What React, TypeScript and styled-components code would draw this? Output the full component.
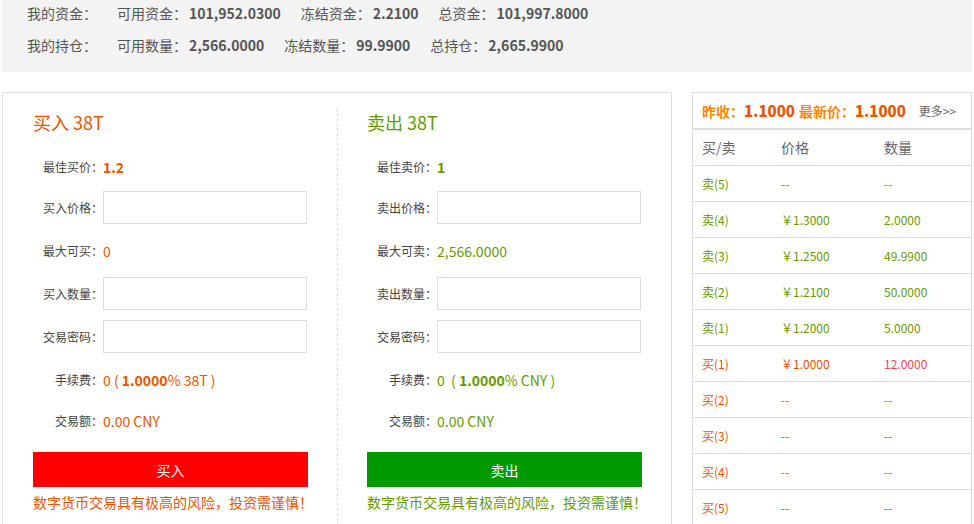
import React from 'react';
import styled, { createGlobalStyle, css } from 'styled-components';

const GlobalStyle = createGlobalStyle`
  body {
    margin: 0;
    font-family: "Microsoft YaHei", "Noto Sans CJK SC", "Noto Sans", sans-serif;
    color: #555;
    background: #fff;
  }
  * { box-sizing: border-box; }
`;

const BUY = '#e55600';
const SELL = '#669900';

const Page = styled.div`
  width: 970px;
  margin-left: 2px;
`;

const TopBar = styled.div`
  background-color: #f3f3f3;
  height: 72px;
  padding: 0 25px;
`;

const TopRow = styled.div<{ first?: boolean }>`
  display: flex;
  align-items: center;
  height: 26px;
  font-size: 14px;
  margin-top: ${p => (p.first ? '0' : '6px')};
`;

const TopLabel = styled.span`
  width: 90px;
`;

const TopItem = styled.span`
  margin-right: 20px;
  b {
    margin-left: 2px;
    color: #555;
    font-weight: bold;
  }
`;

const Main = styled.div`
  display: flex;
  align-items: flex-start;
  gap: 20px;
  margin-top: 20px;
`;

const TradeBox = styled.div`
  width: 670px;
  height: 460px;
  border: 1px solid #ddd;
  display: flex;
`;

const Column = styled.div<{ side: 'buy' | 'sell' }>`
  margin-top: 15px;
  ${p =>
    p.side === 'buy'
      ? css`
          padding: 0 29px 0 30px;
          width: 334px;
        `
      : css`
          padding: 0 28px 0 29px;
          border-left: 1px dashed #ddd;
          flex: 1;
        `}
`;

const Title = styled.h2<{ color: string }>`
  margin: 0 0 14px;
  height: 28px;
  line-height: 28px;
  font-size: 18px;
  font-weight: normal;
  color: ${p => p.color};
`;

const FormRow = styled.div<{ tight?: boolean }>`
  display: flex;
  align-items: center;
  height: 33px;
  margin-bottom: ${p => (p.tight ? '8px' : '10px')};
`;

const Label = styled.label`
  width: 70px;
  text-align: right;
  font-size: 12px;
  color: #444;
  white-space: nowrap;
`;

const Value = styled.span<{ color: string; bold?: boolean }>`
  font-size: 14px;
  color: ${p => p.color};
  font-weight: ${p => (p.bold ? 'bold' : 'normal')};
  b {
    font-weight: bold;
  }
`;

const Input = styled.input`
  width: 204px;
  height: 33px;
  border: 1px solid #ddd;
  outline: none;
  padding: 0 8px;
  font-size: 13px;
`;

const SubmitButton = styled.button<{ color: string }>`
  display: block;
  width: 275px;
  height: 35px;
  margin-top: 15px;
  border: none;
  background-color: ${p => p.color};
  color: #fff;
  font-family: inherit;
  font-size: 14px;
  cursor: pointer;
`;

const Warning = styled.p<{ color: string }>`
  margin: 5px 0 0;
  line-height: 20px;
  font-size: 14px;
  white-space: nowrap;
  color: ${p => p.color};
`;

const BookBox = styled.div`
  width: 281px;
  height: 460px;
  border: 1px solid #ddd;
  overflow: hidden;
`;

const BookHeader = styled.div`
  display: flex;
  align-items: center;
  height: 37px;
  padding: 0 15px 0 9px;
  border-bottom: 2px solid #ddd;
  font-size: 14px;
  white-space: nowrap;
`;

const Stat = styled.span`
  color: #ff8800;
  font-weight: bold;
  margin-right: 4px;
  b {
    color: ${BUY};
    font-size: 15px;
  }
`;

const MoreLink = styled.a`
  margin-left: auto;
  font-size: 12px;
  color: #666;
  text-decoration: none;
`;

const Table = styled.table`
  width: 100%;
  border-collapse: collapse;
`;

const Th = styled.th`
  height: 35px;
  padding: 0 0 0 9px;
  text-align: left;
  font-size: 14px;
  font-weight: normal;
  color: #666;
  border-bottom: 1px solid #ddd;
`;

const Td = styled.td<{ color: string }>`
  height: 36px;
  padding: 0 0 0 9px;
  font-size: 12px;
  color: ${p => p.color};
  border-bottom: 1px solid #ddd;
`;

type Side = 'buy' | 'sell';

interface TradeFormProps {
  side: Side;
}

const TradeForm: React.FC<TradeFormProps> = ({ side }) => {
  const isBuy = side === 'buy';
  const color = isBuy ? BUY : SELL;
  const act = isBuy ? '买入' : '卖出';
  return (
    <Column side={side}>
      <Title color={color}>{act} 38T</Title>
      <FormRow tight>
        <Label>{isBuy ? '最佳买价' : '最佳卖价'}：</Label>
        <Value color={color} bold>{isBuy ? '1.2' : '1'}</Value>
      </FormRow>
      <FormRow>
        <Label>{act}价格：</Label>
        <Input type="text" />
      </FormRow>
      <FormRow>
        <Label>{isBuy ? '最大可买' : '最大可卖'}：</Label>
        <Value color={color}>{isBuy ? '0' : '2,566.0000'}</Value>
      </FormRow>
      <FormRow>
        <Label>{act}数量：</Label>
        <Input type="text" />
      </FormRow>
      <FormRow>
        <Label>交易密码：</Label>
        <Input type="password" />
      </FormRow>
      <FormRow tight>
        <Label>手续费：</Label>
        {isBuy ? (
          <Value color={color}>0 ( <b>1.0000</b>% 38T )</Value>
        ) : (
          <Value color={color}>0 &nbsp;( <b>1.0000</b>% CNY )</Value>
        )}
      </FormRow>
      <FormRow>
        <Label>交易额：</Label>
        <Value color={color}>0.00 CNY</Value>
      </FormRow>
      <SubmitButton color={isBuy ? '#ff0000' : '#009900'}>{act}</SubmitButton>
      <Warning color={color}>数字货币交易具有极高的风险，投资需谨慎！</Warning>
    </Column>
  );
};

const book = [
  { side: 'sell', n: 5, price: '--', qty: '--' },
  { side: 'sell', n: 4, price: '￥1.3000', qty: '2.0000' },
  { side: 'sell', n: 3, price: '￥1.2500', qty: '49.9900' },
  { side: 'sell', n: 2, price: '￥1.2100', qty: '50.0000' },
  { side: 'sell', n: 1, price: '￥1.2000', qty: '5.0000' },
  { side: 'buy', n: 1, price: '￥1.0000', qty: '12.0000' },
  { side: 'buy', n: 2, price: '--', qty: '--' },
  { side: 'buy', n: 3, price: '--', qty: '--' },
  { side: 'buy', n: 4, price: '--', qty: '--' },
  { side: 'buy', n: 5, price: '--', qty: '--' },
];

const OrderBook: React.FC = () => (
  <BookBox>
    <BookHeader>
      <Stat>昨收：<b>1.1000</b></Stat>
      <Stat>最新价：<b>1.1000</b></Stat>
      <MoreLink href="#">更多&gt;&gt;</MoreLink>
    </BookHeader>
    <Table>
      <colgroup>
        <col style={{ width: 79 }} />
        <col style={{ width: 103 }} />
        <col />
      </colgroup>
      <thead>
        <tr>
          <Th>买/卖</Th>
          <Th>价格</Th>
          <Th>数量</Th>
        </tr>
      </thead>
      <tbody>
        {book.map(row => {
          const c = row.side === 'buy' ? BUY : SELL;
          const qtyColor = row.side === 'buy' && row.qty !== '--' ? '#e8474f' : c;
          return (
            <tr key={row.side + row.n}>
              <Td color={c}>{row.side === 'buy' ? '买' : '卖'}({row.n})</Td>
              <Td color={c}>{row.price}</Td>
              <Td color={qtyColor}>{row.qty}</Td>
            </tr>
          );
        })}
      </tbody>
    </Table>
  </BookBox>
);

const App: React.FC = () => (
  <Page>
    <GlobalStyle />
    <TopBar>
      <TopRow first>
        <TopLabel>我的资金：</TopLabel>
        <TopItem>可用资金：<b>101,952.0300</b></TopItem>
        <TopItem>冻结资金：<b>2.2100</b></TopItem>
        <TopItem>总资金：<b>101,997.8000</b></TopItem>
      </TopRow>
      <TopRow>
        <TopLabel>我的持仓：</TopLabel>
        <TopItem>可用数量：<b>2,566.0000</b></TopItem>
        <TopItem>冻结数量：<b>99.9900</b></TopItem>
        <TopItem>总持仓：<b>2,665.9900</b></TopItem>
      </TopRow>
    </TopBar>
    <Main>
      <TradeBox>
        <TradeForm side="buy" />
        <TradeForm side="sell" />
      </TradeBox>
      <OrderBook />
    </Main>
  </Page>
);

export default App;
